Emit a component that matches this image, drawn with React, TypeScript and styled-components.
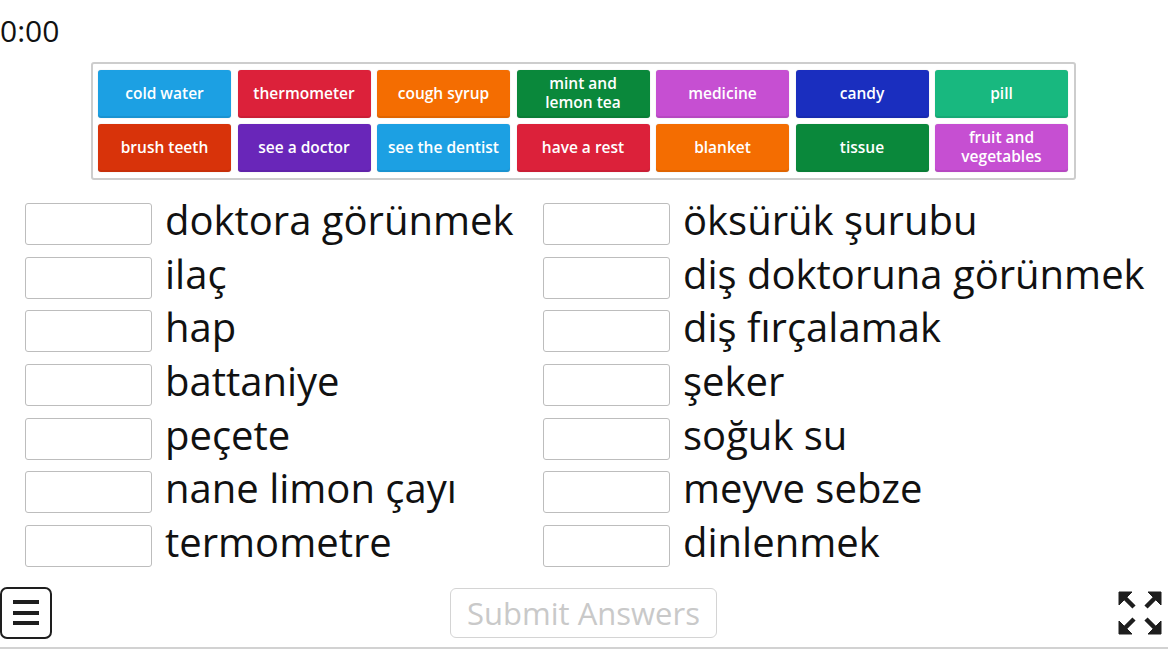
import React from "react";
import styled, { createGlobalStyle } from "styled-components";

const Global = createGlobalStyle`
  html, body { margin: 0; padding: 0; background: #fff; }
  body { font-family: "Open Sans", "Noto Sans", sans-serif; color: #111; }
  * { box-sizing: border-box; }
`;

const Page = styled.div`
  width: 1168px;
  height: 649px;
  display: flex;
  flex-direction: column;
  overflow: hidden;
`;

const Timer = styled.div`
  margin-top: 13px;
  margin-bottom: -2px;
  font-size: 30px;
  line-height: 36px;
  height: 36px;
  color: #111;
`;

const Bank = styled.div`
  align-self: center;
  margin-top: 15px;
  margin-left: -1px;
  width: 985px;
  border: 2px solid #cdcdcd;
  border-radius: 3px;
  padding: 6px 6px 6px 5px;
  display: grid;
  grid-template-columns: repeat(7, 133px);
  grid-auto-rows: 48px;
  column-gap: 6.5px;
  row-gap: 6px;
`;

const Tile = styled.div<{ $bg: string }>`
  background: ${(p) => p.$bg};
  border-radius: 3px;
  box-shadow: inset 0 -2px 0 rgba(0, 0, 0, 0.08), 0 0 1px rgba(0, 0, 0, 0.25);
  color: #fff;
  font-weight: 600;
  font-size: 15px;
  display: flex;
  flex-direction: column;
  align-items: center;
  justify-content: center;
  text-align: center;
  white-space: nowrap;
  padding: 0 4px 2px;
`;

const TileLine = styled.span`
  display: block;
  height: 19px;
  line-height: 19px;
  font-size: 15.5px;
`;

const Pairs = styled.div`
  margin-top: 23px;
  padding-left: 25px;
  display: grid;
  grid-template-columns: 518px 518px;
  grid-auto-flow: column;
  grid-template-rows: repeat(7, 42px);
  row-gap: 11.67px;
`;

const Pair = styled.div`
  display: flex;
  align-items: center;
  gap: 14px;
  white-space: nowrap;
`;

const Slot = styled.div`
  flex: none;
  width: 127px;
  height: 42px;
  border: 1px solid #bdbdbd;
  border-radius: 3px;
  background: #fff;
`;

const Word = styled.span`
  font-size: 40px;
  line-height: 42px;
  color: #111;
  position: relative;
  top: -4px;
  left: -1px;
`;

const Footer = styled.div`
  margin-top: 20px;
  height: 62px;
  border-bottom: 2px solid #d2d2d2;
  display: grid;
  grid-template-columns: 1fr auto 1fr;
  align-items: start;
`;

const MenuButton = styled.div`
  width: 52px;
  height: 52px;
  border: 2.5px solid #1e1e1e;
  border-radius: 7px;
  display: flex;
  flex-direction: column;
  justify-content: center;
  align-items: center;
  gap: 6.5px;
`;

const MenuLine = styled.div`
  width: 26px;
  height: 4px;
  background: #1e1e1e;
`;

const Submit = styled.div`
  margin-top: 1px;
  margin-left: -1px;
  width: 267px;
  height: 50px;
  border: 1.5px solid #d4d4d4;
  border-radius: 6px;
  color: #c9c9c9;
  font-size: 31px;
  display: flex;
  align-items: center;
  justify-content: center;
`;

const Full = styled.div`
  justify-self: end;
  margin-top: 3px;
  margin-right: 5px;
  width: 46px;
  height: 46px;
`;

const tiles: { t: string[]; c: string }[] = [
  { t: ["cold water"], c: "#1ca0e3" },
  { t: ["thermometer"], c: "#dc213a" },
  { t: ["cough syrup"], c: "#f46d01" },
  { t: ["mint and", "lemon tea"], c: "#0a883b" },
  { t: ["medicine"], c: "#c64fd2" },
  { t: ["candy"], c: "#1a2ebf" },
  { t: ["pill"], c: "#18b87f" },
  { t: ["brush teeth"], c: "#d8330a" },
  { t: ["see a doctor"], c: "#6926b9" },
  { t: ["see the dentist"], c: "#1ca0e3" },
  { t: ["have a rest"], c: "#dc213a" },
  { t: ["blanket"], c: "#f46d01" },
  { t: ["tissue"], c: "#0a883b" },
  { t: ["fruit and", "vegetables"], c: "#c64fd2" },
];

const words = [
  "doktora görünmek",
  "ilaç",
  "hap",
  "battaniye",
  "peçete",
  "nane limon çayı",
  "termometre",
  "öksürük şurubu",
  "diş doktoruna görünmek",
  "diş fırçalamak",
  "şeker",
  "soğuk su",
  "meyve sebze",
  "dinlenmek",
];

export default function App() {
  return (
    <Page>
      <Global />
      <Timer>0:00</Timer>
      <Bank>
        {tiles.map((x) => (
          <Tile key={x.t.join(" ")} $bg={x.c}>
            {x.t.map((line) => (
              <TileLine key={line}>{line}</TileLine>
            ))}
          </Tile>
        ))}
      </Bank>
      <Pairs>
        {words.map((w) => (
          <Pair key={w}>
            <Slot />
            <Word>{w}</Word>
          </Pair>
        ))}
      </Pairs>
      <Footer>
        <MenuButton>
          <MenuLine />
          <MenuLine />
          <MenuLine />
        </MenuButton>
        <Submit>Submit Answers</Submit>
        <Full>
          <svg width="46" height="46" viewBox="0 0 46 46" fill="#1e1e1e" stroke="#1e1e1e" strokeLinecap="butt" strokeLinejoin="miter">
            <path d="M2 2 H15 L2 15 Z" strokeWidth="1" />
            <path d="M44 2 V15 L31 2 Z" strokeWidth="1" />
            <path d="M2 44 V31 L15 44 Z" strokeWidth="1" />
            <path d="M44 44 H31 L44 31 Z" strokeWidth="1" />
            <path d="M5 5 L17 17 M41 5 L29 17 M5 41 L17 29 M41 41 L29 29" fill="none" strokeWidth="4.5" />
          </svg>
        </Full>
      </Footer>
    </Page>
  );
}
